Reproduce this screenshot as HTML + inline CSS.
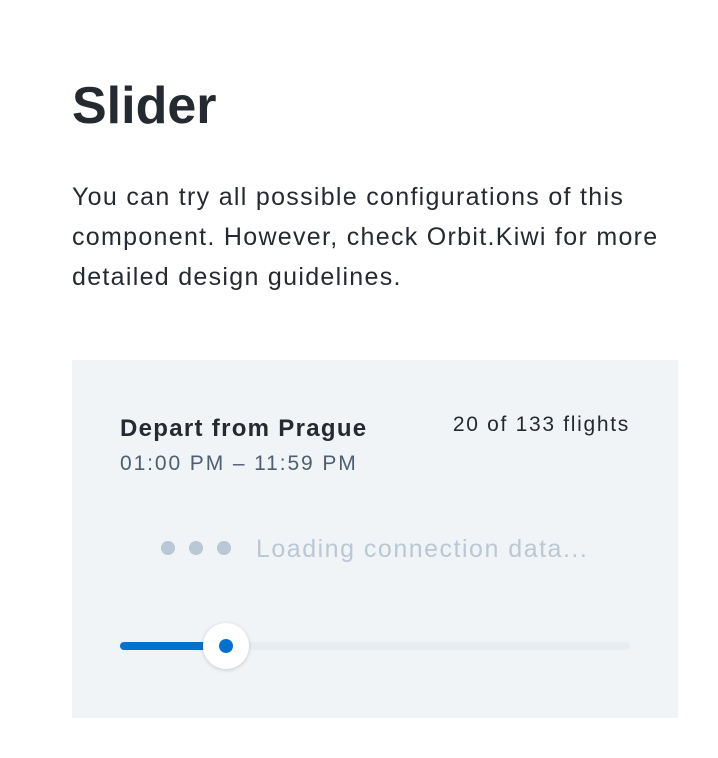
<!DOCTYPE html>
<html><head><style>
body{margin:0;background:#fff;font-family:"Liberation Sans",Arial,sans-serif;color:#252a31;width:718px;height:758px;position:relative;overflow:hidden}
h1{position:absolute;left:72px;top:74px;margin:0;font-size:52px;font-weight:bold;line-height:64px;letter-spacing:0px}
p{position:absolute;left:72px;top:177px;margin:0;font-size:25px;line-height:40px;width:640px;letter-spacing:1.3px}
.card{position:absolute;left:72px;top:360px;width:606px;height:358px;background:#f1f4f7}
.t1{position:absolute;left:48px;top:55px;font-size:24px;font-weight:bold;letter-spacing:1.3px}
.t2{position:absolute;left:48px;top:92px;font-size:21px;color:#4f5e71;letter-spacing:1.9px}
.t3{position:absolute;right:48px;top:53px;font-size:21px;letter-spacing:1.7px}
.dot{position:absolute;top:181px;width:14px;height:14px;border-radius:50%;background:#bac7d5}
.load{position:absolute;left:184px;top:175px;font-size:25px;color:#bac7d5;letter-spacing:1.5px}
.track{position:absolute;left:48px;top:282px;width:510px;height:8px;border-radius:4px;background:#e8edf1}
.fill{position:absolute;left:48px;top:282px;width:108px;height:8px;border-radius:4px;background:#0172cb}
.h{position:absolute;left:131px;top:263px;width:46px;height:46px;border-radius:50%;background:#fff;box-shadow:0 1px 4px rgba(37,42,49,.2)}
.h:after{content:"";position:absolute;left:16px;top:16px;width:14px;height:14px;border-radius:50%;background:#0172cb}
</style></head><body>
<h1>Slider</h1>
<p>You can try all possible configurations of this<br>component. However, check Orbit.Kiwi for more<br>detailed design guidelines.</p>
<div class="card">
<div class="t1">Depart from Prague</div>
<div class="t2">01:00 PM – 11:59 PM</div>
<div class="t3">20 of 133 flights</div>
<div class="dot" style="left:89px"></div><div class="dot" style="left:117px"></div><div class="dot" style="left:145px"></div>
<div class="load">Loading connection data...</div>
<div class="track"></div><div class="fill"></div><div class="h"></div>
</div>
</body></html>
